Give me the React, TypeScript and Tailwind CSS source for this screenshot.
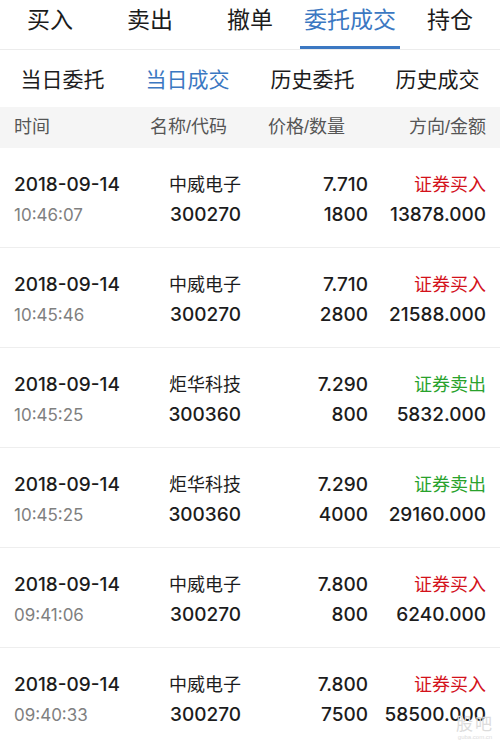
import React from 'react';

type Trade = {
  date: string;
  time: string;
  name: string;
  code: string;
  price: string;
  qty: string;
  side: 'buy' | 'sell';
  amount: string;
};

const trades: Trade[] = [
  { date: '2018-09-14', time: '10:46:07', name: '中威电子', code: '300270', price: '7.710', qty: '1800', side: 'buy', amount: '13878.000' },
  { date: '2018-09-14', time: '10:45:46', name: '中威电子', code: '300270', price: '7.710', qty: '2800', side: 'buy', amount: '21588.000' },
  { date: '2018-09-14', time: '10:45:25', name: '炬华科技', code: '300360', price: '7.290', qty: '800', side: 'sell', amount: '5832.000' },
  { date: '2018-09-14', time: '10:45:25', name: '炬华科技', code: '300360', price: '7.290', qty: '4000', side: 'sell', amount: '29160.000' },
  { date: '2018-09-14', time: '09:41:06', name: '中威电子', code: '300270', price: '7.800', qty: '800', side: 'buy', amount: '6240.000' },
  { date: '2018-09-14', time: '09:40:33', name: '中威电子', code: '300270', price: '7.800', qty: '7500', side: 'buy', amount: '58500.000' },
];

const topTabs = ['买入', '卖出', '撤单', '委托成交', '持仓'];
const subTabs = ['当日委托', '当日成交', '历史委托', '历史成交'];

export default function App() {
  return (
    <div className="relative w-[500px] bg-white text-[#1c1c1c] font-['Liberation_Sans','Noto_Sans_CJK_SC',sans-serif] overflow-hidden">
      {/* Top tabs */}
      <div className="flex h-[50px] border-b border-[#ececec]">
        {topTabs.map((t, i) => (
          <div key={t} className="flex-1 flex flex-col items-center">
            <span
              className={`text-[23px] leading-[41px] ${i === 3 ? 'text-[#3b78c2]' : 'text-[#1c1c1c]'}`}
            >
              {t}
            </span>
            {i === 3 && <div className="mt-[5px] h-[3px] w-[100px] bg-[#3b78c2]" />}
          </div>
        ))}
      </div>

      {/* Sub tabs */}
      <div className="flex h-[57px] items-center pt-[3px]">
        {subTabs.map((t, i) => (
          <div
            key={t}
            className={`flex-1 text-center text-[21px] ${i === 1 ? 'text-[#3b78c2]' : 'text-[#1c1c1c]'}`}
          >
            {t}
          </div>
        ))}
      </div>

      {/* Header */}
      <div className="flex h-[41px] items-center bg-[#f5f5f5] pl-[14px] pr-[14px] text-[18px] text-[#555]">
        <div className="w-[136px]">时间</div>
        <div className="w-[118px]">名称/代码</div>
        <div className="w-[82px]">价格/数量</div>
        <div className="flex-1 text-right">方向/金额</div>
      </div>

      {/* Rows */}
      {trades.map((r, i) => (
        <div key={i} className="flex h-[100px] border-b border-[#eeeeee] px-[14px] py-[22px] leading-[30px]">
          <div className="w-[140px]">
            <div className="font-['Inter','Noto_Sans_CJK_SC',sans-serif] text-[19px] font-medium text-[#1c1c1c]">{r.date}</div>
            <div className="font-['Inter','Noto_Sans_CJK_SC',sans-serif] text-[17px] text-[#808080]">{r.time}</div>
          </div>
          <div className="w-[87px] text-right">
            <div className="text-[18px]">{r.name}</div>
            <div className="font-['Inter',sans-serif] text-[19px] font-medium">{r.code}</div>
          </div>
          <div className="w-[127px] text-right font-['Inter',sans-serif] text-[19px] font-medium">
            <div>{r.price}</div>
            <div>{r.qty}</div>
          </div>
          <div className="flex-1 text-right">
            <div className={`text-[18px] ${r.side === 'buy' ? 'text-[#d3121b]' : 'text-[#29a22c]'}`}>
              {r.side === 'buy' ? '证券买入' : '证券卖出'}
            </div>
            <div className="font-['Inter',sans-serif] text-[19px] font-medium">{r.amount}</div>
          </div>
        </div>
      ))}

      {/* Watermark */}
      <div className="absolute right-[6px] top-[716px] flex flex-col items-center text-[#dcdcdc]">
        <span className="text-[17px] leading-[18px] tracking-[2px]">股吧</span>
        <span className="text-[6px] leading-[7px]">guba.com.cn</span>
      </div>
    </div>
  );
}
